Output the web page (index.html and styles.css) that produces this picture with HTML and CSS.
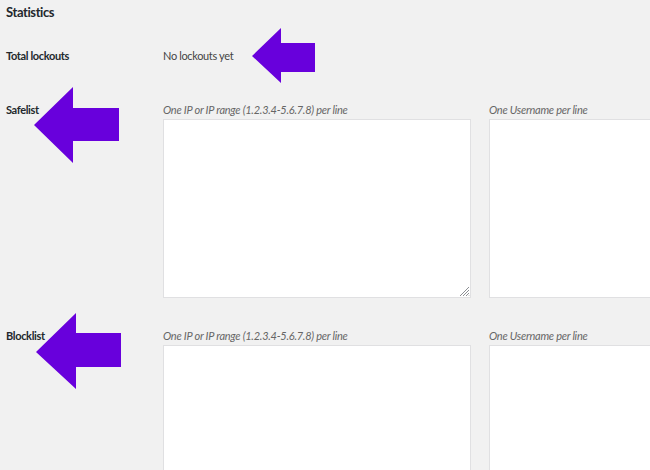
FILE: index.html
```html
<!DOCTYPE html>
<html>
<head>
<meta charset="utf-8">
<link rel="stylesheet" href="styles.css">
</head>
<body>
<div class="page">
  <h2 class="title">Statistics</h2>
  <div class="row row-stats">
    <div class="label">Total lockouts</div>
    <div class="value">No lockouts yet</div>
  </div>
  <div class="row row-safe">
    <div class="label">Safelist</div>
    <div class="fields">
      <div class="field">
        <div class="hint">One IP or IP range (1.2.3.4-5.6.7.8) per line</div>
        <textarea class="box"></textarea>
        <svg class="grip" width="11" height="11" viewBox="0 0 11 11"><path d="M10 1 L1 10 M10 4 L4 10 M10 7 L7 10 M10 9.5 L9.5 10" stroke="#8c8f94" stroke-width="1" fill="none"/></svg>
      </div>
      <div class="field">
        <div class="hint">One Username per line</div>
        <textarea class="box"></textarea>
      </div>
    </div>
  </div>
  <div class="row row-block">
    <div class="label">Blocklist</div>
    <div class="fields">
      <div class="field">
        <div class="hint">One IP or IP range (1.2.3.4-5.6.7.8) per line</div>
        <textarea class="box"></textarea>
      </div>
      <div class="field">
        <div class="hint">One Username per line</div>
        <textarea class="box"></textarea>
      </div>
    </div>
  </div>

  <svg class="arrow arrow-1" width="63" height="55" viewBox="0 0 63 55"><polygon points="0,28 29,0 29,15 63,15 63,44 29,44 29,55" fill="#6800dc"/></svg>
  <svg class="arrow arrow-2" width="85" height="76" viewBox="0 0 85 76"><polygon points="0,38 39,0 39,21 85,21 85,54 39,54 39,76" fill="#6800dc"/></svg>
  <svg class="arrow arrow-3" width="85" height="76" viewBox="0 0 85 76"><polygon points="0,39 40,0 40,20 85,20 85,54 40,54 40,76" fill="#6800dc"/></svg>
</div>
</body>
</html>
```
FILE: styles.css
```css
html, body {
  margin: 0;
  padding: 0;
  background: #f1f1f1;
  overflow: hidden;
}
body {
  width: 650px;
  height: 470px;
  font-family: Lato, "Noto Sans", sans-serif;
  color: #1d2327;
}
.page {
  position: relative;
  padding-left: 6px;
  height: 470px;
  overflow: hidden;
}
.title {
  margin: 0;
  padding-top: 2px;
  font-size: 13px;
  line-height: 20px;
  font-weight: 700;
  letter-spacing: -0.4px;
  color: #23282d;
}
.row {
  display: flex;
  align-items: flex-start;
}
.row-stats { margin-top: 26px; }
.row-safe { margin-top: 38px; }
.row-block { margin-top: 30px; }
.label {
  width: 157px;
  flex-shrink: 0;
  font-size: 11px;
  line-height: 16px;
  font-weight: 700;
  letter-spacing: -0.35px;
  color: #23282d;
}
.value {
  font-size: 11px;
  line-height: 16px;
  letter-spacing: -0.35px;
  color: #444;
}
.fields {
  display: flex;
  gap: 18px;
}
.field {
  position: relative;
  display: flex;
  flex-direction: column;
}
.hint {
  font-size: 11px;
  line-height: 16px;
  font-style: italic;
  letter-spacing: -0.25px;
  color: #666;
  margin-bottom: 1px;
}
.box {
  display: block;
  box-sizing: border-box;
  width: 308px;
  height: 179px;
  margin: 0;
  padding: 0;
  background: #fff;
  border: 1px solid #e0e0e2;
  border-radius: 0;
  resize: none;
  outline: none;
}
.grip {
  position: absolute;
  right: 1px;
  bottom: 1px;
  display: block;
}
.arrow {
  position: absolute;
  display: block;
}
.arrow-1 { left: 252px; top: 28px; }
.arrow-2 { left: 34px; top: 87px; }
.arrow-3 { left: 36px; top: 313px; }
```
